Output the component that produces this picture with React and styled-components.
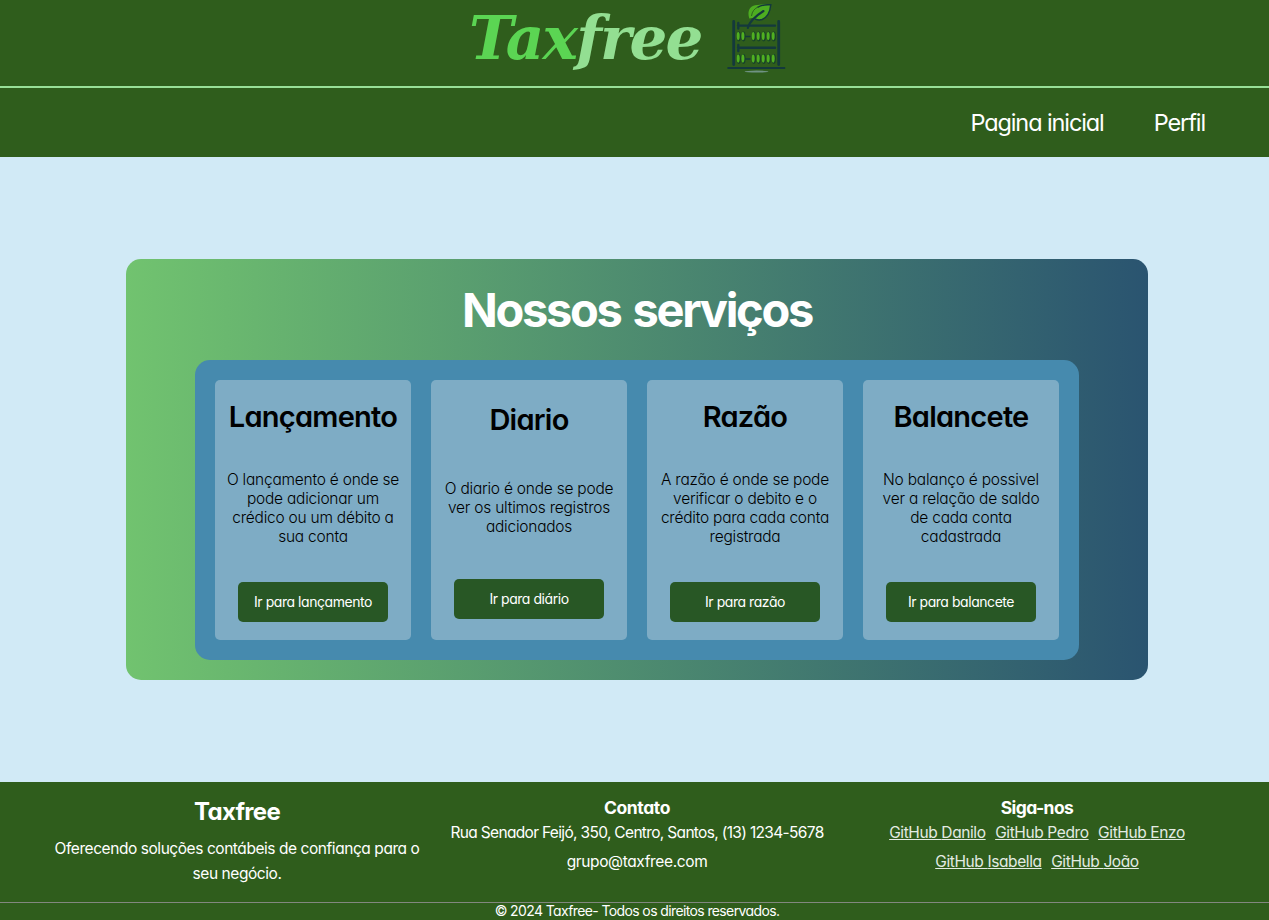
import React from "react";
import styled, { createGlobalStyle } from "styled-components";

const GlobalStyle = createGlobalStyle`
  * { box-sizing: border-box; margin: 0; padding: 0; }
  html, body { overflow: hidden; }
  body {
    background: #d1eaf6;
    font-family: Inter, "Open Sans", sans-serif;
    font-feature-settings: "cv11" 1;
  }
`;

const Page = styled.div`
  width: 1274px;
  height: 920px;
  display: flex;
  flex-direction: column;
`;

const Header = styled.header`
  background: #2f5d1c;
  color: #fff;
`;

const Brand = styled.div`
  height: 88px;
  padding: 3px 0 0 469px;
  border-bottom: 2px solid #98df97;
  display: flex;
  align-items: flex-start;
`;

const Wordmark = styled.h1`
  width: 258px;
  font: italic 700 59.5px/70px "DejaVu Serif", serif;
  letter-spacing: -1.8px;
  color: #93df92;
`;

const WordmarkAccent = styled.span`
  color: #5bd553;
`;

const Nav = styled.nav`
  height: 69px;
  padding-right: 69px;
  display: flex;
  align-items: center;
  justify-content: flex-end;
  gap: 50px;
`;

const NavLink = styled.a`
  font-size: 23.5px;
  letter-spacing: -1.1px;
  color: #fff;
`;

const Main = styled.main`
  flex: 1;
  display: flex;
  align-items: center;
  justify-content: center;
`;

const Panel = styled.section`
  width: 1022px;
  height: 421px;
  padding-bottom: 20px;
  border-radius: 15px;
  background: linear-gradient(to right, #71c36f, #2a5470);
  display: flex;
  flex-direction: column;
  align-items: center;
`;

const PanelTitle = styled.h2`
  height: 101px;
  line-height: 101px;
  font-size: 47px;
  font-weight: 650;
  letter-spacing: -2.3px;
  word-spacing: 3px;
  color: #fff;
`;

const Cards = styled.div`
  height: 300px;
  padding: 20px;
  border-radius: 15px;
  background: #468aae;
  display: grid;
  grid-template-columns: repeat(4, 196px);
  gap: 20px;
`;

const Card = styled.article`
  padding: 0 10px;
  border-radius: 5px;
  background: #7eacc5;
  display: flex;
  flex-direction: column;
  align-items: center;
  justify-content: space-around;
  text-align: center;
`;

const CardTitle = styled.h3`
  height: 36px;
  font-size: 29px;
  line-height: 38px;
  font-weight: 600;
  letter-spacing: -0.75px;
  color: #000;
`;

const CardText = styled.p`
  font-size: 15.5px;
  line-height: 19px;
  font-weight: 300;
  letter-spacing: -0.23px;
  color: #000;
  white-space: pre-line;
`;

const CardButton = styled.button`
  width: 150px;
  height: 40px;
  padding-bottom: 1px;
  border: 0;
  border-radius: 5px;
  background: #285725;
  color: #fff;
  font: 400 14px Inter, sans-serif;
  font-feature-settings: inherit;
  letter-spacing: -0.45px;
`;

const Footer = styled.footer`
  height: 138px;
  background: #2f5d1c;
  color: #fff;
`;

const FooterColumns = styled.div`
  height: 120px;
  padding: 15px 37px 0;
  display: grid;
  grid-template-columns: repeat(3, 400px);
  text-align: center;
`;

const FooterBrand = styled.h3`
  font-size: 24px;
  line-height: 30px;
  letter-spacing: -0.7px;
  margin-bottom: 9px;
`;

const FooterHeading = styled.h4`
  font-size: 17.5px;
  line-height: 22px;
  letter-spacing: ${(p) => p.$spacing || "-0.4px"};
  margin-bottom: 1px;
`;

const FooterText = styled.p`
  font-size: 15.5px;
  line-height: 25px;
  letter-spacing: ${(p) => p.$spacing || "-0.44px"};
  margin-bottom: ${(p) => p.$gap || 0};
  white-space: pre-line;
`;

const Links = styled.div`
  padding: 0 45px;
  display: flex;
  flex-wrap: wrap;
  justify-content: center;
  gap: 4px 9.5px;
`;

const FooterLink = styled.a`
  font-size: 15.5px;
  line-height: 25px;
  letter-spacing: -0.39px;
  color: #e3ebe3;
  text-decoration: underline;
`;

const Copyright = styled.p`
  border-top: 1px solid #82877f;
  font-size: 14px;
  line-height: 16px;
  letter-spacing: -0.62px;
  text-align: center;
`;

const beadColumns = [738.3, 743, 753.3, 758.3, 763.3, 768.3, 773.3];

function AbacusLogo() {
  return (
    <svg width="60" height="72" viewBox="727 3 60 72" fill="none">
      <g stroke="#14393c" strokeLinecap="round">
        <path strokeWidth="2.8" d="M733.7 21.5V64.5M778.7 21.5V64.5" />
        <path strokeWidth="2.4" d="M738 25.6H775M738 47.7H775M738.3 23V28.5M738.3 45V51" />
        <path strokeWidth="1.4" d="M745 36.5H750M745 59H750" />
        <path strokeWidth="2" d="M728.2 68H784.4" />
      </g>
      {[36.5, 59].map((y) =>
        beadColumns.map((x) => (
          <g key={`${x}-${y}`}>
            <ellipse cx={x + 0.5} cy={y} rx="2.1" ry="4.9" fill="#17402a" />
            <ellipse cx={x - 0.1} cy={y - 0.4} rx="1.5" ry="4.1" fill="#50b021" />
          </g>
        ))
      )}
      <ellipse cx="756.5" cy="71.6" rx="12" ry="1" fill="#6f9283" />
      <path
        d="M749.3 18.5C746.8 11 750 4.5 758 5C763 4 767.5 4.2 771 4.8C770.3 10 768.5 17 762 19.5C758 20.7 755 19.5 752.5 18"
        fill="#4dad21"
      />
      <path
        d="M757.5 7.3C762 4.6 766.5 4.4 770.8 4.8C770.3 10 768.5 17 762 19.5C759.5 20.3 757 19.8 755 19"
        stroke="#14393c"
        strokeWidth="1.5"
      />
      <path d="M751.5 16C752 11.5 754.5 8.3 758.5 6.8" stroke="#2d651d" strokeWidth="1" />
      <path
        d="M747.8 28C749 22.5 754 17 763.5 11"
        stroke="#14393c"
        strokeWidth="2.1"
        strokeLinecap="round"
      />
    </svg>
  );
}

const services = [
  {
    title: "Lançamento",
    text: "O lançamento é onde se\npode adicionar um\ncrédico ou um débito a\nsua conta",
    action: "Ir para lançamento",
  },
  {
    title: "Diario",
    text: "O diario é onde se pode\nver os ultimos registros\nadicionados",
    action: "Ir para diário",
  },
  {
    title: "Razão",
    text: "A razão é onde se pode\nverificar o debito e o\ncrédito para cada conta\nregistrada",
    action: "Ir para razão",
  },
  {
    title: "Balancete",
    text: "No balanço é possivel\nver a relação de saldo\nde cada conta\ncadastrada",
    action: "Ir para balancete",
  },
];

const profiles = ["Danilo", "Pedro", "Enzo", "Isabella", "João"];

export default function App() {
  return (
    <Page>
      <GlobalStyle />
      <Header>
        <Brand>
          <Wordmark>
            <WordmarkAccent>Tax</WordmarkAccent>free
          </Wordmark>
          <AbacusLogo />
        </Brand>
        <Nav>
          <NavLink>Pagina inicial</NavLink>
          <NavLink>Perfil</NavLink>
        </Nav>
      </Header>
      <Main>
        <Panel>
          <PanelTitle>Nossos serviços</PanelTitle>
          <Cards>
            {services.map((s) => (
              <Card key={s.title}>
                <CardTitle>{s.title}</CardTitle>
                <CardText>{s.text}</CardText>
                <CardButton>{s.action}</CardButton>
              </Card>
            ))}
          </Cards>
        </Panel>
      </Main>
      <Footer>
        <FooterColumns>
          <div>
            <FooterBrand>Taxfree</FooterBrand>
            <FooterText>{"Oferecendo soluções contábeis de confiança para o\nseu negócio."}</FooterText>
          </div>
          <div>
            <FooterHeading>Contato</FooterHeading>
            <FooterText $spacing="-0.67px" $gap="4px">
              Rua Senador Feijó, 350, Centro, Santos, (13) 1234-5678
            </FooterText>
            <FooterText $spacing="-0.37px">grupo@taxfree.com</FooterText>
          </div>
          <div>
            <FooterHeading $spacing="-0.6px">Siga-nos</FooterHeading>
            <Links>
              {profiles.map((name) => (
                <FooterLink key={name}>GitHub {name}</FooterLink>
              ))}
            </Links>
          </div>
        </FooterColumns>
        <Copyright>© 2024 Taxfree- Todos os direitos reservados.</Copyright>
      </Footer>
    </Page>
  );
}
